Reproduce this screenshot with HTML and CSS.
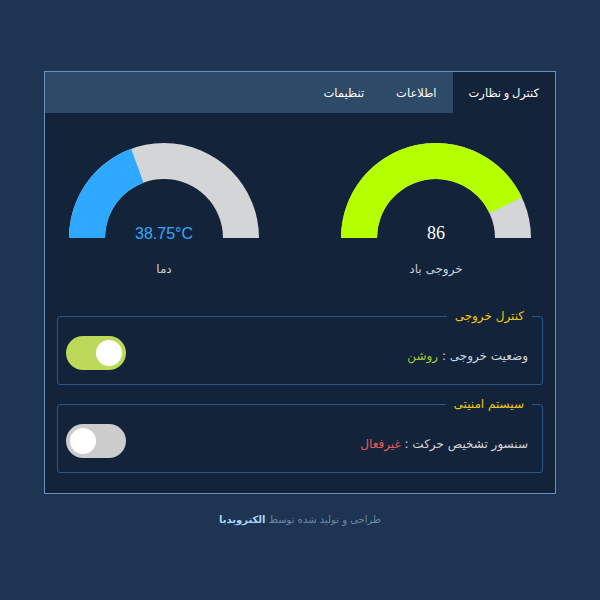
FILE: index.html
```html
<!DOCTYPE html>
<html lang="fa" dir="rtl">
<head>
<meta charset="utf-8">
<title>پنل کنترل</title>
<link rel="stylesheet" href="styles.css">
</head>
<body>
<div class="panel">
  <nav class="tabs">
    <div class="tab active">کنترل و نظارت</div>
    <div class="tab">اطلاعات</div>
    <div class="tab">تنظیمات</div>
  </nav>
  <main class="content">
    <section class="gauges">
      <div class="gauge">
        <svg class="gauge-svg" width="192" height="100" viewBox="0 0 192 100">
          <path d="M 1 96 A 95 95 0 0 1 191 96 L 155 96 A 59 59 0 0 0 37 96 Z" fill="#d4d5d7"/>
          <path d="M 1 96 A 95 95 0 0 1 181.96 55.55 L 149.38 70.88 A 59 59 0 0 0 37 96 Z" fill="#b4ff00"/>
          <text x="96" y="97" text-anchor="middle" class="val-wind">86</text>
        </svg>
        <div class="gauge-label">خروجی باد</div>
      </div>
      <div class="gauge">
        <svg class="gauge-svg" width="192" height="100" viewBox="0 0 192 100">
          <path d="M 1 96 A 95 95 0 0 1 191 96 L 155 96 A 59 59 0 0 0 37 96 Z" fill="#d4d5d7"/>
          <path d="M 1 96 A 95 95 0 0 1 63.12 6.87 L 75.58 40.65 A 59 59 0 0 0 37 96 Z" fill="#2fa9ff"/>
          <text x="96" y="97" text-anchor="middle" class="val-temp">38.75°C</text>
        </svg>
        <div class="gauge-label">دما</div>
      </div>
    </section>

    <fieldset class="box">
      <legend>کنترل خروجی</legend>
      <div class="row">
        <div class="status">وضعیت خروجی : <span class="on">روشن</span></div>
        <div class="toggle toggle-on"><span class="knob"></span></div>
      </div>
    </fieldset>

    <fieldset class="box box-second">
      <legend>سیستم امنیتی</legend>
      <div class="row">
        <div class="status">سنسور تشخیص حرکت : <span class="off">غیرفعال</span></div>
        <div class="toggle toggle-off"><span class="knob"></span></div>
      </div>
    </fieldset>
  </main>
</div>
<footer class="footer">طراحی و تولید شده توسط <b class="brand">الکترویدیا</b></footer>
</body>
</html>
```

FILE: styles.css
```css
html, body {
  margin: 0;
  padding: 0;
}
body {
  background: #1d3552;
  font-family: "DejaVu Sans", "Noto Sans", sans-serif;
  color: #d0d6de;
  height: 600px;
}
.panel {
  width: 510px;
  margin: 71px auto 0;
  border: 1px solid #6b8fbd;
  background: #13243a;
}
.tabs {
  display: flex;
  background: #2d4a66;
  height: 41px;
}
.tab {
  display: flex;
  align-items: center;
  padding: 0 16px;
  font-size: 11.5px;
  word-spacing: -1px;
  color: #ffffff;
}
.tab.active {
  background: #13243a;
}
.content {
  padding: 29px 12px 20px;
}
.gauges {
  display: grid;
  grid-template-columns: 1fr 1fr;
  column-gap: 34px;
  margin: 0 -12px;
}
.gauge {
  display: flex;
  flex-direction: column;
  align-items: center;
}
.gauge-svg {
  display: block;
}
.val-temp {
  font-family: "Liberation Sans", sans-serif;
  font-size: 16px;
  fill: #2fa9ff;
}
.val-wind {
  font-family: "Liberation Serif", serif;
  font-size: 18px;
  fill: #ffffff;
}
.gauge-label {
  margin-top: 20px;
  font-size: 12px;
  color: #c9d1da;
}
.box {
  margin: 33px 0 0;
  padding: 13px 14px 14px 8px;
  border: 1px solid #2b5685;
  border-radius: 3px;
}
.box-second {
  margin-top: 12px;
}
.box legend {
  margin-right: -4px;
  padding: 0 8px;
  font-size: 12px;
  color: #f2c80f;
}
.row {
  display: flex;
  align-items: center;
  justify-content: space-between;
}
.status {
  font-size: 12px;
  color: #d0d6de;
  padding-top: 6px;
}
.on {
  color: #a5c83c;
}
.off {
  color: #e35d5d;
}
.toggle {
  width: 60px;
  height: 34px;
  border-radius: 17px;
  display: flex;
  align-items: center;
  padding: 0 4px;
  box-sizing: border-box;
}
.toggle .knob {
  width: 26px;
  height: 26px;
  border-radius: 50%;
  background: #ffffff;
}
.toggle-on {
  background: #bcd95a;
  justify-content: flex-start;
}
.toggle-off {
  background: #cccccc;
  justify-content: flex-end;
}
.footer {
  text-align: center;
  margin-top: 20px;
  font-size: 10px;
  color: #6e89a8;
}
.brand {
  color: #a9d3f5;
}
```
